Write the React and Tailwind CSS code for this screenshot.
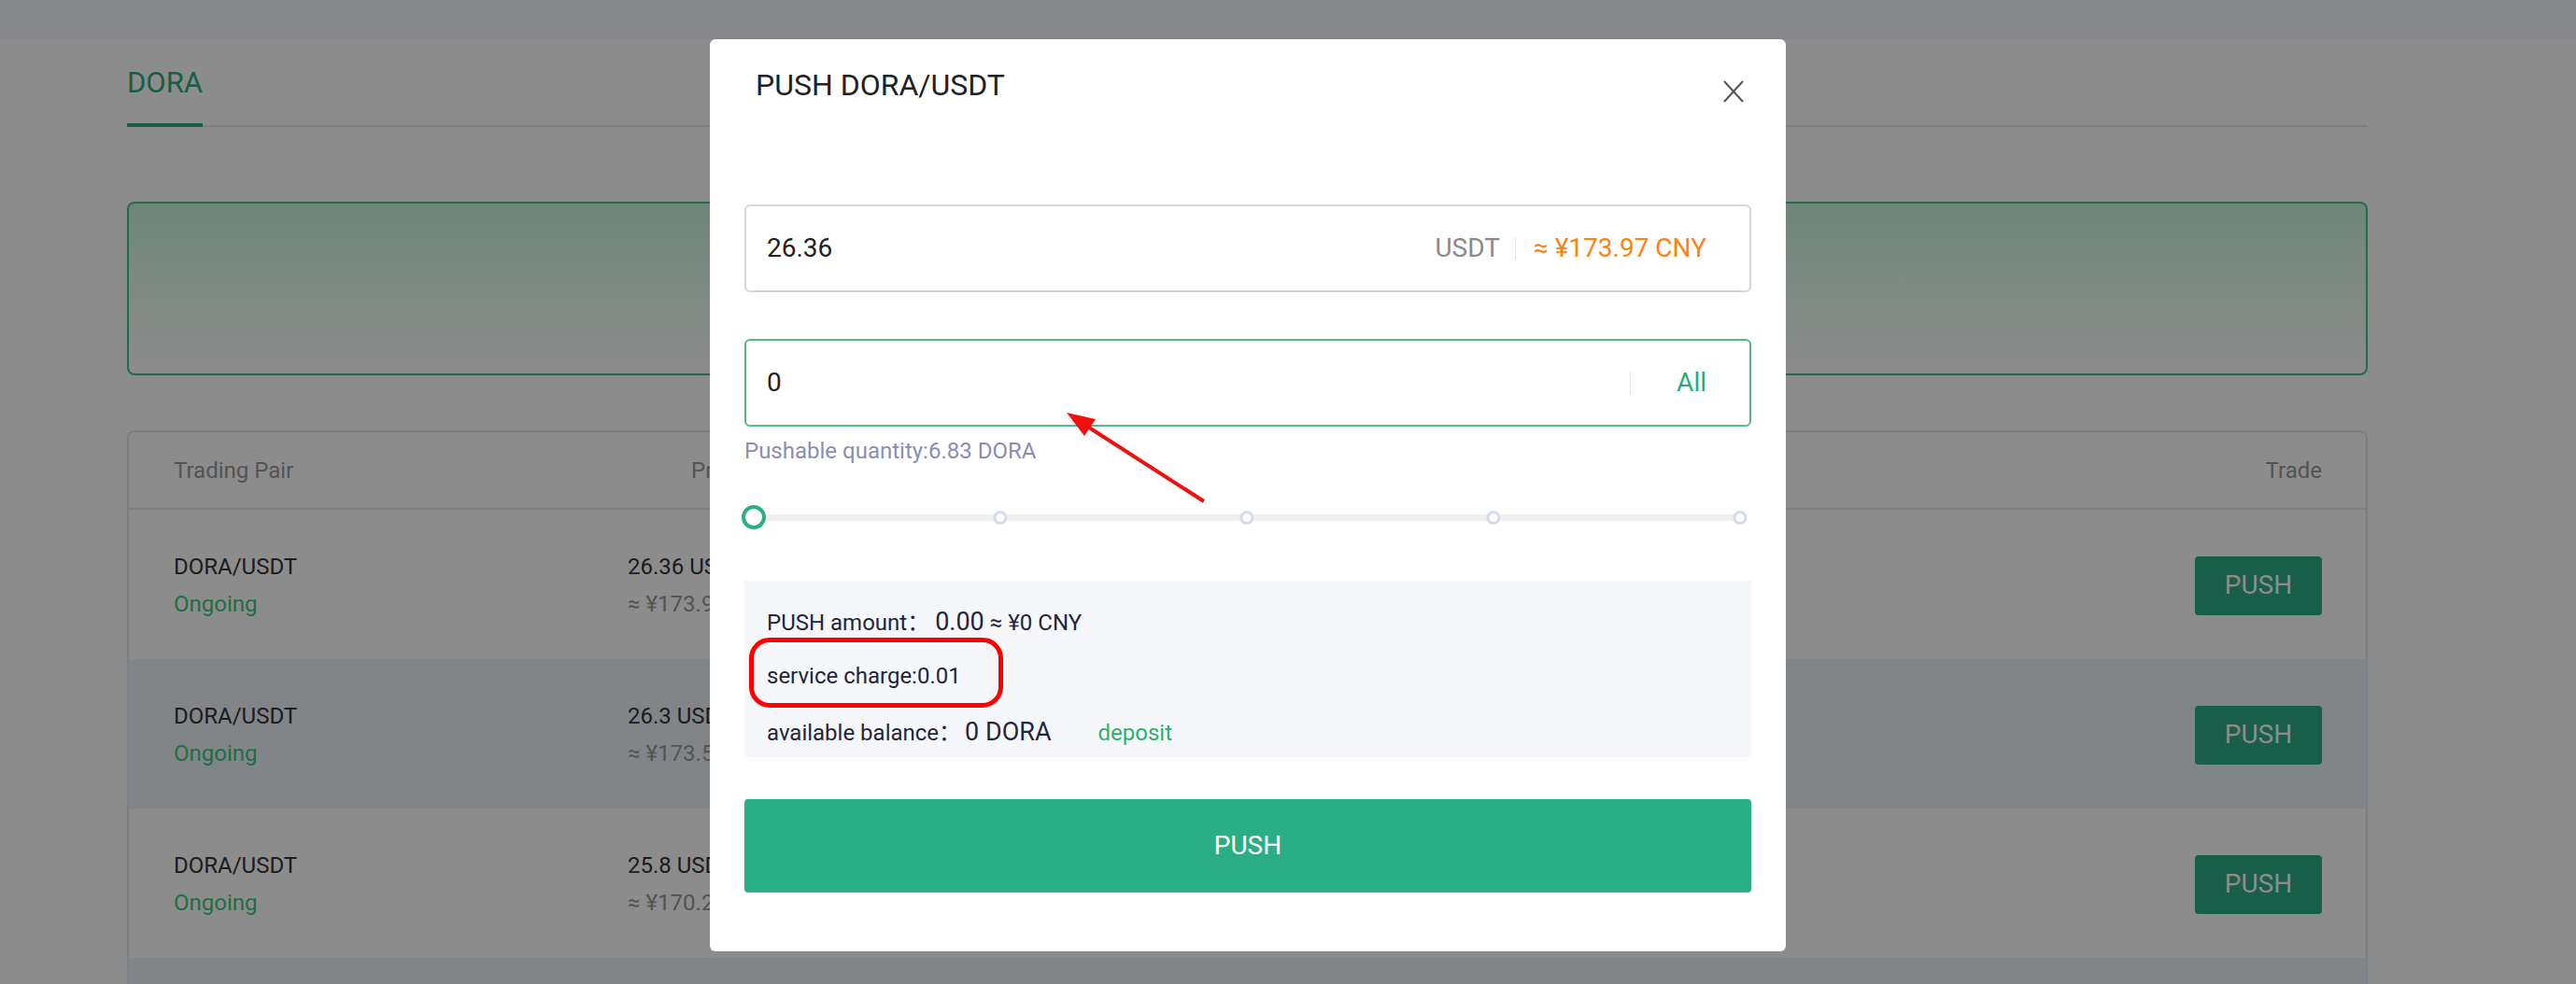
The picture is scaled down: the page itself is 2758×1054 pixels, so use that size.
import React from "react";

const rows = [
  { pair: "DORA/USDT", price: "26.36", cny: "173.97" },
  { pair: "DORA/USDT", price: "26.3", cny: "173.58" },
  { pair: "DORA/USDT", price: "25.8", cny: "170.28" },
];

const steps = ["0%", "25%", "50%", "75%", "100%"];

// slider dots, first one is the active handle
const SliderDot = ({ left, active }) => (
  <span
    className={
      active
        ? "absolute top-0 -translate-x-1/2 w-[26px] h-[26px] rounded-full border-4 border-[#2aae86] bg-white"
        : "absolute top-[6px] -translate-x-1/2 w-[15px] h-[15px] rounded-full border-[3px] border-[#d3dbe8] bg-white"
    }
    style={{ left }}
  />
);

const PushModal = () => (
  <div className="absolute left-[760px] top-[42px] w-[1152px] h-[977px] bg-white rounded-[6px] px-[37px] pt-[30px]">
    <div className="pl-[12px] text-[32px] leading-[38px] text-[#222]">PUSH DORA/USDT</div>

    <button className="absolute right-[45px] top-[44px] w-[22px] h-[24px]">
      <svg width="22" height="24" viewBox="0 0 22 24" fill="none" stroke="#555" strokeWidth="2">
        <line x1="1" y1="1" x2="21" y2="23" />
        <line x1="21" y1="1" x2="1" y2="23" />
      </svg>
    </button>

    {/* price */}
    <div className="mt-[109px] h-[94px] border-2 border-[#d6d6d6] rounded-[6px] flex items-center pl-[22px] pr-[46px] text-[28px]">
      <span className="flex-1 text-[#222]">26.36</span>
      <span className="text-[#8a8a8a]">USDT</span>
      <span className="ml-[16px] mr-[19px] w-px h-[24px] bg-[#dce3ee]" />
      <span className="text-[#ff8212]">≈ ¥173.97 CNY</span>
    </div>

    {/* quantity */}
    <div className="mt-[50px] h-[94px] border-2 border-[#5ab785] rounded-[6px] flex items-center pl-[22px] pr-[46px] text-[28px]">
      <span className="flex-1 text-[#222]">0</span>
      <span className="mr-[49px] w-px h-[24px] bg-[#dce3ee]" />
      <span className="text-[#28ab80]">All</span>
    </div>
    <div className="mt-[12px] text-[24px] leading-[28px] text-[#8b8db6]">Pushable quantity:6.83 DORA</div>

    <div className="relative mt-[44px] ml-[10px] mr-[12px] h-[26px]">
      <div className="absolute left-0 right-0 top-[10px] h-[7px] rounded-full bg-[#efefef]" />
      {steps.map((s, i) => (
        <SliderDot key={s} left={s} active={i === 0} />
      ))}
    </div>

    {/* summary */}
    <div className="relative mt-[55px] bg-[#f6f7fb] pt-[15px] pl-[24px] text-[24px] text-[#25253a]">
      <div className="h-[58px] flex items-center">
        <span>
          PUSH amount：<span className="ml-[6px] text-[27px]">0.00</span> ≈ ¥0 CNY
        </span>
      </div>
      <div className="h-[58px] flex items-center">service charge:0.01</div>
      <div className="h-[58px] flex items-center pt-[4px]">
        <span>
          available balance：<span className="ml-[4px] text-[27px]">0 DORA</span>
          <span className="ml-[50px] text-[#2ab36a]">deposit</span>
        </span>
      </div>
      <div className="absolute left-[5px] top-[61px] w-[272px] h-[75px] border-[5px] border-[#ff0000] rounded-[22px]" />
    </div>

    <button className="mt-[45px] w-full h-[100px] rounded-[4px] bg-[#2aae86] text-white text-[28px]">PUSH</button>

    {/* annotation arrow */}
    <svg className="absolute left-[370px] top-[388px]" width="170" height="115" viewBox="0 0 170 115">
      <line x1="159" y1="107" x2="33" y2="26" stroke="#f01010" strokeWidth="4" />
      <polygon points="12,12 43,19 31,37" fill="#f01010" />
    </svg>
  </div>
);

const App = () => {
  return (
    <div className="relative h-[1054px] overflow-hidden bg-white font-[family-name:Roboto,'Noto_Sans_CJK_SC',sans-serif]">
      <div className="h-[42px] bg-[#f4f6fd]" />

      <div className="ml-[136px] w-[2399px]">
        <div className="flex border-b-2 border-[#e4e7f0]">
          <div className="-mb-[2px] pt-[29px] pb-[25px] border-b-4 border-[#2aae86] text-[31px] leading-[36px] text-[#2aae86]">
            DORA
          </div>
        </div>

        <div className="mt-[80px] h-[186px] rounded-[8px] border-2 border-[#45c286] bg-gradient-to-b from-[#c8f5de] to-white" />

        <div className="mt-[59px] border-2 border-[#e2e8f0] rounded-t-[8px]">
          <div className="h-[83px] flex items-center pl-[48px] pr-[47px] border-b-2 border-[#e2e8f0] text-[24px] text-[#999]">
            <span className="w-[554px]">Trading Pair</span>
            <span className="flex-1">Price</span>
            <span>Trade</span>
          </div>
          {rows.map((r, i) => (
            <div
              key={i}
              className={`h-[160px] flex items-center pl-[48px] pr-[47px] pt-[2px] text-[24px] leading-[40px] ${i % 2 === 1 ? "bg-[#ecf2f8]" : ""}`}
            >
              <div className="w-[486px]">
                <p className="text-[#333]">{r.pair}</p>
                <p className="text-[#3cc97f]">Ongoing</p>
              </div>
              <div className="flex-1">
                <p className="text-[#333]">{r.price} USDT</p>
                <p className="text-[#999]">≈ ¥{r.cny} CNY</p>
              </div>
              <button className="w-[136px] h-[63px] rounded-[4px] bg-[#2aae86] text-white text-[28px]">PUSH</button>
            </div>
          ))}
          <div className="h-[160px] bg-[#ecf2f8]" />
        </div>
      </div>

      <div className="fixed inset-0 bg-black/45" />
      <PushModal />
    </div>
  );
};

export default App;
